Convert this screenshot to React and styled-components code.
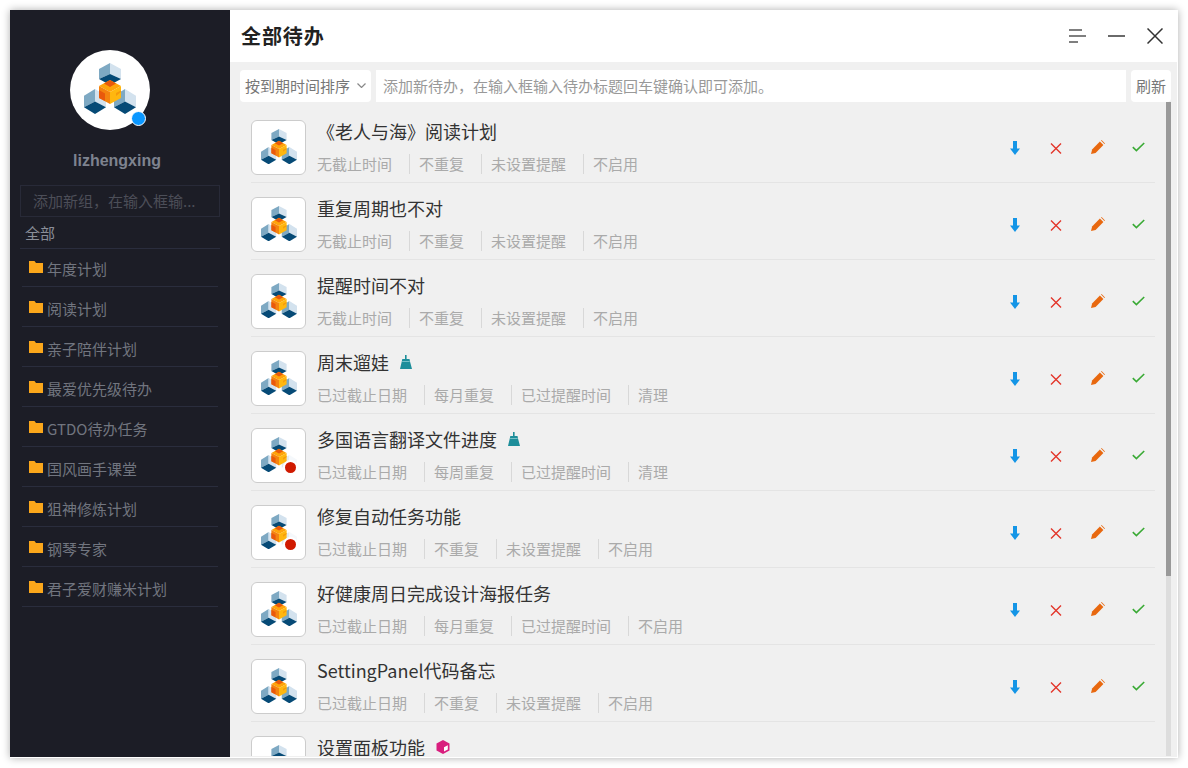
import React from "react";
import styled, { createGlobalStyle } from "styled-components";

const GlobalStyle = createGlobalStyle`
  html, body {
    margin: 0;
    padding: 0;
    background: #fff;
    overflow: hidden;
  }
  * {
    box-sizing: border-box;
  }
  body {
    font-family: "Noto Sans CJK SC", "Liberation Sans", sans-serif;
  }
`;

const Page = styled.div`
  width: 1188px;
  height: 768px;
  padding: 10px;
`;

const Frame = styled.div`
  display: flex;
  width: 1168px;
  height: 748px;
  overflow: hidden;
  background: #fff;
  border-right: 1px solid #fff;
  border-bottom: 1px solid #fff;
  box-shadow: 0 0 8px rgba(0, 0, 0, 0.32);
`;

/* left column */
const Sidebar = styled.aside`
  display: flex;
  flex-direction: column;
  width: 220px;
  flex: none;
  padding: 40px 10px 0;
  background: #1c1d26;
`;

const Avatar = styled.div`
  position: relative;
  display: flex;
  align-items: center;
  justify-content: center;
  width: 80px;
  height: 80px;
  margin-left: 50px;
  padding-bottom: 3px;
  border-radius: 50%;
  background: #fff;
`;

const StatusDot = styled.span`
  position: absolute;
  right: 4px;
  bottom: 4px;
  width: 15px;
  height: 15px;
  border: 1.5px solid #fff;
  border-radius: 50%;
  background: #0a97ff;
`;

const UserName = styled.div`
  margin: 20px 0 14px 53px;
  height: 21px;
  font-family: "Liberation Sans", sans-serif;
  font-size: 16px;
  font-weight: 700;
  line-height: 21px;
  color: #7e838f;
`;

const GroupInput = styled.input`
  display: block;
  width: 200px;
  height: 32px;
  flex: none;
  padding: 0 12px 2px;
  border: 1px solid #282a38;
  outline: none;
  background: transparent;
  font-family: inherit;
  font-size: 15px;
  color: #777;

  &::placeholder {
    color: #4c4e58;
    opacity: 1;
  }
`;

const AllGroups = styled.div`
  height: 32px;
  margin-bottom: -2px;
  padding-left: 5px;
  border-bottom: 1px solid #2a2d3d;
  font-size: 15px;
  line-height: 31px;
  color: #8a8e98;
`;

const GroupRow = styled.div`
  display: flex;
  align-items: center;
  gap: 4px;
  height: 40px;
  margin: 0 2px;
  padding: 3px 0 0 7px;
  border-bottom: 1px solid #2a2d3d;
  font-size: 15px;
  color: #71757f;
`;

/* right column */
const Main = styled.main`
  display: flex;
  flex-direction: column;
  flex: 1;
  min-width: 0;
  background: #f0f0f0;
`;

const Header = styled.header`
  display: flex;
  align-items: center;
  justify-content: space-between;
  height: 52px;
  flex: none;
  padding: 0 14px 1px 11px;
  background: #fff;
`;

const Title = styled.h1`
  margin: 0;
  font-size: 20px;
  font-weight: 700;
  letter-spacing: 0.9px;
  color: #222;
`;

const WindowControls = styled.div`
  display: flex;
  align-items: center;
  gap: 22px;
`;

const Toolbar = styled.div`
  display: flex;
  gap: 5px;
  height: 32px;
  flex: none;
  margin-top: 8px;
  padding: 0 6px 0 10px;
`;

const SortSelect = styled.div`
  display: flex;
  align-items: center;
  justify-content: space-between;
  width: 131px;
  flex: none;
  padding: 0 5px 1px;
  border-radius: 4px;
  background: #fff;
  font-size: 15px;
  color: #777;
`;

const TodoInput = styled.input`
  flex: 1;
  min-width: 0;
  padding: 0 7px 2px;
  border: none;
  outline: none;
  background: #fff;
  font-family: inherit;
  font-size: 15px;

  &::placeholder {
    color: #999;
    opacity: 1;
  }
`;

const RefreshButton = styled.button`
  width: 40px;
  flex: none;
  padding: 0 0 2px;
  border: none;
  border-radius: 4px;
  background: #fff;
  font-family: inherit;
  font-size: 15px;
  color: #777;
`;

const ListArea = styled.div`
  position: relative;
  flex: 1;
  min-height: 0;
  margin-bottom: 1px;
  overflow: hidden;
  padding: 4px 22px 0 21px;
`;

const ScrollTrack = styled.div`
  position: absolute;
  top: 0;
  right: 6px;
  bottom: 0;
  width: 5px;
  background: #ddd;
`;

const ScrollThumb = styled.div`
  height: 474px;
  background: #999;
`;

const TodoRow = styled.div`
  display: flex;
  align-items: flex-start;
  height: 77px;
  padding-top: 14px;
  border-bottom: 1px solid #e4e4e4;
`;

const Tile = styled.div`
  position: relative;
  display: flex;
  align-items: center;
  justify-content: center;
  width: 55px;
  height: 55px;
  flex: none;
  padding-bottom: 2px;
  border: 1px solid #ccc;
  border-radius: 6px;
  background: #fff;
`;

const OverdueDot = styled.span`
  position: absolute;
  right: 7px;
  bottom: 7px;
  width: 15px;
  height: 15px;
  border: 2px solid #fff;
  border-radius: 50%;
  background: #d01a00;
`;

const TodoBody = styled.div`
  flex: 1;
  min-width: 0;
  margin: -2px 0 0 11px;
`;

const TodoTitle = styled.div`
  display: flex;
  align-items: center;
  gap: 11px;
  height: 26px;
  font-size: 18px;
  line-height: 26px;
  color: #333;
`;

const MetaRow = styled.div`
  display: flex;
  align-items: center;
  height: 20px;
  margin-top: 10px;
  font-size: 15px;
  color: #aaa;
`;

const MetaItem = styled.span`
  height: 20px;
  line-height: 20px;
  padding-right: 17px;
  margin-right: 9px;
  border-right: 1px solid #d8d8d8;

  &:last-child {
    padding-right: 0;
    margin-right: 0;
    border-right: none;
  }
`;

const Actions = styled.div`
  display: flex;
  align-items: center;
  gap: 17px;
  flex: none;
  height: 16px;
  margin: 19px 5px 0 0;
`;

const ActionCell = styled.span`
  display: flex;
  align-items: center;
  justify-content: center;
  width: 24px;
`;

const Icon = styled.svg`
  display: block;
  flex: none;
`;

const LoweredIcon = styled(Icon)`
  margin-top: 2px;
`;

const PencilSvg = styled(Icon)`
  margin-left: 2px;
`;

const FolderSvg = styled(Icon)`
  margin-top: -2px;
`;

/* one open cube: two walls and a dark floor */
const Cube = ({ x, y, w = 22, h = 24, faded }) => {
  const mx = x + w / 2;
  const side = h * 0.27;
  const mid = y + h / 2;
  return (
    <g opacity={faded ? 0.22 : 1}>
      <polygon fill="#7ea9c3" points={`${mx},${y} ${mx},${mid} ${x},${y + h - side} ${x},${y + side}`} />
      <polygon fill="#d3e2ee" points={`${mx},${y} ${x + w},${y + side} ${x + w},${y + h - side} ${mx},${mid}`} />
      {!faded && (
        <polygon fill="#064a76" points={`${mx},${mid} ${x + w},${y + h - side} ${mx},${y + h} ${x},${y + h - side}`} />
      )}
    </g>
  );
};

const Logo = ({ size, faded }) => (
  <Icon width={size} height={(size * 51) / 52} viewBox="0 0 52 51">
    <Cube x={15} y={0} h={22} />
    <Cube x={0} y={26} h={25} />
    <Cube x={30} y={26} h={25} faded={faded} />
    <polygon fill="#ffa40a" points="26,17 37,23 26,29 15,23" />
    <polygon fill="#e9590c" points="26,17 32,20.5 26,24 20,20.5" />
    <polygon fill="#f4830f" points="15,23 26,29 26,41 15,35" />
    <polygon fill="#e9590c" points="15,27 21,30.5 21,38 15,35" />
    <polygon fill="#ffb70f" points="37,23 37,35 26,41 26,29" />
    <polygon fill="#f59a0b" points="32,30 37,27.5 37,29 32,33" />
  </Icon>
);

const Folder = () => (
  <FolderSvg width="14" height="12" viewBox="0 0 14 12">
    <path fill="#fba71b" d="M0 0h5.5l1.5 2H14v10H0z" />
  </FolderSvg>
);

const ArrowIcon = () => (
  <LoweredIcon width="10" height="14" viewBox="0 0 10 14">
    <path fill="#1495e6" d="M3 0h4v7.5h3L5 14 0 7.5h3z" />
  </LoweredIcon>
);

const CloseIcon = () => (
  <LoweredIcon width="12" height="11" viewBox="0 0 12 11">
    <path fill="none" stroke="#e3352a" strokeWidth="1.4" d="M1 .5l10 10M11 .5l-10 10" />
  </LoweredIcon>
);

const PencilIcon = () => (
  <PencilSvg width="14" height="14" viewBox="0 0 14 14">
    <path fill="#e8680f" d="M0 14l1.1-4.6L8.9 1.6l3.5 3.5-7.8 7.8z" />
    <path fill="#e8680f" d="M10 .6l.6-.6 3.4 3.4-.6.6z" />
  </PencilSvg>
);

const CheckIcon = () => (
  <Icon width="13" height="10" viewBox="0 0 13 10">
    <path fill="none" stroke="#3aaa35" strokeWidth="1.6" d="M.8 5.2l3.6 3.4L12.2 1" />
  </Icon>
);

const BroomIcon = () => (
  <Icon width="12" height="14" viewBox="0 0 12 14">
    <path fill="#1d8e9a" d="M5 0h1.6v4h2.9l.7 3.2 1.8 6.8H0l1.6-6.8L2.3 4H5z" />
    <path fill="#8ccdd3" d="M2.1 6h7.6v.8H2.1z" />
  </Icon>
);

const BoxIcon = () => (
  <Icon width="14" height="14" viewBox="0 0 14 14">
    <polygon fill="#d91e7e" points="7,0 13.5,3.5 13.5,10.5 7,14 .5,10.5 .5,3.5" />
    <polygon fill="#fff" points="8,7.3 11.8,5.2 11.8,9.6 8,11.6" />
  </Icon>
);

const TAGS = { broom: <BroomIcon />, box: <BoxIcon /> };

const NO_DATE = ["无截止时间", "不重复", "未设置提醒", "不启用"];

const TODOS = [
  { title: "《老人与海》阅读计划", meta: NO_DATE },
  { title: "重复周期也不对", meta: NO_DATE },
  { title: "提醒时间不对", meta: NO_DATE },
  { title: "周末遛娃", tag: "broom", meta: ["已过截止日期", "每月重复", "已过提醒时间", "清理"] },
  { title: "多国语言翻译文件进度", tag: "broom", overdue: true, meta: ["已过截止日期", "每周重复", "已过提醒时间", "清理"] },
  { title: "修复自动任务功能", overdue: true, meta: ["已过截止日期", "不重复", "未设置提醒", "不启用"] },
  { title: "好健康周日完成设计海报任务", meta: ["已过截止日期", "每月重复", "已过提醒时间", "不启用"] },
  { title: "SettingPanel代码备忘", meta: ["已过截止日期", "不重复", "未设置提醒", "不启用"] },
  { title: "设置面板功能", tag: "box", meta: [] },
];

const GROUPS = [
  "年度计划",
  "阅读计划",
  "亲子陪伴计划",
  "最爱优先级待办",
  "GTDO待办任务",
  "国风画手课堂",
  "狙神修炼计划",
  "钢琴专家",
  "君子爱财赚米计划",
];

const App = () => (
  <Page>
    <GlobalStyle />
    <Frame>
      <Sidebar>
        <Avatar>
          <Logo size={52} />
          <StatusDot />
        </Avatar>
        <UserName>lizhengxing</UserName>
        <GroupInput placeholder="添加新组，在输入框输..." />
        <AllGroups>全部</AllGroups>
        {GROUPS.map((name) => (
          <GroupRow key={name}>
            <Folder />
            {name}
          </GroupRow>
        ))}
      </Sidebar>
      <Main>
        <Header>
          <Title>全部待办</Title>
          <WindowControls>
            <Icon width="17" height="14" viewBox="0 0 17 14">
              <path fill="none" stroke="#555" strokeWidth="1.6" d="M0 1h13M0 7h17M0 13h9" />
            </Icon>
            <Icon width="17" height="14" viewBox="0 0 17 14">
              <path fill="none" stroke="#444" strokeWidth="1.6" d="M0 7h17" />
            </Icon>
            <Icon width="16" height="16" viewBox="0 0 16 16">
              <path fill="none" stroke="#333" strokeWidth="1.5" d="M.5.5l15 15M15.5.5l-15 15" />
            </Icon>
          </WindowControls>
        </Header>
        <Toolbar>
          <SortSelect>
            按到期时间排序
            <Icon width="9" height="5" viewBox="0 0 9 5">
              <path fill="none" stroke="#888" strokeWidth="1.2" d="M.5.5l4 4 4-4" />
            </Icon>
          </SortSelect>
          <TodoInput placeholder="添加新待办，在输入框输入待办标题回车键确认即可添加。" />
          <RefreshButton>刷新</RefreshButton>
        </Toolbar>
        <ListArea>
          {TODOS.map((todo) => (
            <TodoRow key={todo.title}>
              <Tile>
                <Logo size={36} faded={todo.overdue} />
                {todo.overdue && <OverdueDot />}
              </Tile>
              <TodoBody>
                <TodoTitle>
                  {todo.title}
                  {todo.tag && TAGS[todo.tag]}
                </TodoTitle>
                <MetaRow>
                  {todo.meta.map((text) => (
                    <MetaItem key={text}>{text}</MetaItem>
                  ))}
                </MetaRow>
              </TodoBody>
              <Actions>
                <ActionCell><ArrowIcon /></ActionCell>
                <ActionCell><CloseIcon /></ActionCell>
                <ActionCell><PencilIcon /></ActionCell>
                <ActionCell><CheckIcon /></ActionCell>
              </Actions>
            </TodoRow>
          ))}
          <ScrollTrack>
            <ScrollThumb />
          </ScrollTrack>
        </ListArea>
      </Main>
    </Frame>
  </Page>
);

export default App;
